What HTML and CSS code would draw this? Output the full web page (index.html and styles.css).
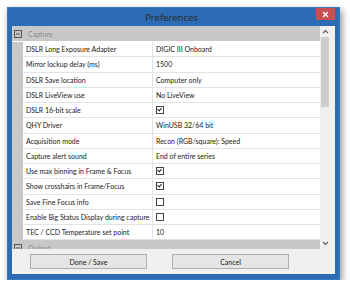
FILE: index.html
```html
<!DOCTYPE html>
<html lang="en">
<head>
    <meta charset="UTF-8">
    <title>Preferences</title>
    <link rel="stylesheet" href="styles.css">
</head>
<body>
    <div class="window">
        <div class="titlebar">
            <span class="title">Preferences</span>
            <div class="close-btn">
                <svg width="7" height="7" viewBox="0 0 7 7"><path d="M1 1L6 6M6 1L1 6" stroke="#fff" stroke-width="1.4"/></svg>
            </div>
        </div>
        <div class="client">
            <div class="list-area">
                <div class="grid">
                    <div class="section">
                        <svg class="toggle" width="8" height="8" viewBox="0 0 8 8"><rect x="0.5" y="0.5" width="7" height="7" fill="none" stroke="#555"/><path d="M2 4H6" stroke="#555"/></svg>
                        <span>Capture</span>
                    </div>
                    <div class="row"><div class="gutter"></div><div class="name">DSLR Long Exposure Adapter</div><div class="value">DIGIC III Onboard</div></div>
                    <div class="row"><div class="gutter"></div><div class="name">Mirror lockup delay (ms)</div><div class="value">1500</div></div>
                    <div class="row"><div class="gutter"></div><div class="name">DSLR Save location</div><div class="value">Computer only</div></div>
                    <div class="row"><div class="gutter"></div><div class="name">DSLR LiveView use</div><div class="value">No LiveView</div></div>
                    <div class="row"><div class="gutter"></div><div class="name">DSLR 16-bit scale</div><div class="value"><span class="check on"></span></div></div>
                    <div class="row"><div class="gutter"></div><div class="name">QHY Driver</div><div class="value">WinUSB 32/64 bit</div></div>
                    <div class="row"><div class="gutter"></div><div class="name">Acquisition mode</div><div class="value">Recon (RGB/square): Speed</div></div>
                    <div class="row"><div class="gutter"></div><div class="name">Capture alert sound</div><div class="value">End of entire series</div></div>
                    <div class="row"><div class="gutter"></div><div class="name">Use max binning in Frame &amp; Focus</div><div class="value"><span class="check on"></span></div></div>
                    <div class="row"><div class="gutter"></div><div class="name">Show crosshairs in Frame/Focus</div><div class="value"><span class="check on"></span></div></div>
                    <div class="row"><div class="gutter"></div><div class="name">Save Fine Focus info</div><div class="value"><span class="check"></span></div></div>
                    <div class="row"><div class="gutter"></div><div class="name">Enable Big Status Display during capture</div><div class="value"><span class="check"></span></div></div>
                    <div class="row"><div class="gutter"></div><div class="name">TEC / CCD Temperature set point</div><div class="value">10</div></div>
                    <div class="section">
                        <svg class="toggle" width="8" height="8" viewBox="0 0 8 8"><rect x="0.5" y="0.5" width="7" height="7" fill="none" stroke="#555"/><path d="M2 4H6" stroke="#555"/></svg>
                        <span>Output</span>
                    </div>
                </div>
                <div class="scrollbar">
                    <div class="arrow"><svg width="7" height="5" viewBox="0 0 7 5"><path d="M1 4L3.5 1.5L6 4" fill="none" stroke="#606060" stroke-width="1.2"/></svg></div>
                    <div class="thumb"></div>
                    <div class="track"></div>
                    <div class="arrow"><svg width="7" height="5" viewBox="0 0 7 5"><path d="M1 1L3.5 3.5L6 1" fill="none" stroke="#606060" stroke-width="1.2"/></svg></div>
                </div>
            </div>
            <div class="footer">
                <button class="btn">Done / Save</button>
                <button class="btn">Cancel</button>
            </div>
        </div>
    </div>
</body>
</html>
```
FILE: styles.css
```css
body {
    margin: 0;
    padding: 0;
    background-color: #FFFFFF;
    font-family: Lato, "Liberation Sans", sans-serif;
    font-size: 7px;
    color: #1a1a1a;
}
.window {
    margin: 7px 0 0 7px;
    width: 333px;
    height: 273px;
    box-sizing: border-box;
    background-color: #2c6cb4; /* Win8 blue */
    border: 1px solid #3a78c0;
    padding: 0 4px 5px 4px;
    display: flex;
    flex-direction: column;
    box-shadow: 2px 3px 7px rgba(0, 0, 0, 0.45);
}
.titlebar {
    height: 18px;
    position: relative;
    display: flex;
    justify-content: center;
    align-items: center;
}
.title {
    font-family: "Noto Sans", sans-serif;
    font-size: 9.5px;
    color: #2b2b2b;
    margin-left: -4px;
}
.close-btn {
    position: absolute;
    right: 0;
    top: 0;
    width: 19px;
    height: 12px;
    background-color: #c75050; /* Red close */
    display: flex;
    justify-content: center;
    align-items: center;
}
.client {
    flex: 1;
    background-color: #f0f0f0;
    display: flex;
    flex-direction: column;
}
.list-area {
    height: 223px;
    display: flex;
    padding-right: 5px;
}
.grid {
    width: 308px;
    overflow: hidden;
    background-color: #FFFFFF;
}
.section {
    height: 15px;
    background-color: #c8c8c8;
    display: flex;
    align-items: center;
    color: #8c8c8c;
    border-bottom: 1px solid #FFFFFF;
}
.section .toggle {
    margin: 0 6px 0 2px;
}
.row {
    display: grid;
    grid-template-columns: 11px 130px 1fr;
    height: 15.25px;
}
.gutter {
    background-color: #c8c8c8;
}
.name, .value {
    display: flex;
    align-items: center;
    white-space: nowrap;
    border-bottom: 1px solid #e3e3e3;
    padding-left: 3px;
    overflow: hidden;
}
.name {
    border-right: 1px solid #e3e3e3;
}
.check {
    width: 6px;
    height: 6px;
    border: 1px solid #444;
    background-color: #FFFFFF;
    position: relative;
}
.check.on::after {
    content: "";
    position: absolute;
    left: 1px;
    top: 0px;
    width: 2px;
    height: 3px;
    border-right: 1.3px solid #222;
    border-bottom: 1.3px solid #222;
    transform: rotate(40deg);
}
.scrollbar {
    width: 10px;
    display: flex;
    flex-direction: column;
    background-color: #f0f0f0;
}
.arrow {
    height: 11px;
    display: flex;
    justify-content: center;
    align-items: center;
}
.thumb {
    height: 70px;
    margin: 0 1px;
    background-color: #cdcdcd;
}
.track {
    flex: 1;
}
.footer {
    flex: 1;
    display: flex;
    align-items: center;
    padding-left: 18px;
    gap: 25px;
}
.btn {
    width: 117px;
    height: 15px;
    padding: 0;
    font-family: Lato, "Liberation Sans", sans-serif;
    font-size: 7px;
    color: #1a1a1a;
    background-color: #e5e5e5;
    border: 1px solid #adadad;
}
```
